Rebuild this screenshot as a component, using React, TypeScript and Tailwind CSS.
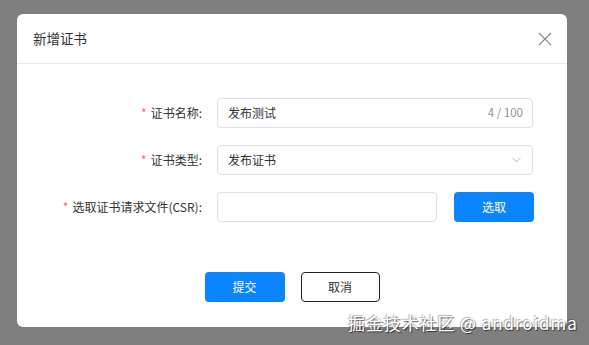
import React from "react";

const font = { fontFamily: '"Noto Sans CJK SC", "Noto Sans", sans-serif' };

function Label({ text }: { text: string }) {
  return (
    <div className="w-[200px] shrink-0 text-right text-[12px] text-[#333] pr-[15px] leading-[30px]">
      <span className="text-[#f56c6c] mr-[4px]">*</span>
      {text}
    </div>
  );
}

export default function App() {
  return (
    <div className="relative w-[589px] h-[345px] bg-[#7f7f7f] overflow-hidden" style={font}>
      <div className="absolute left-[17px] top-[14px] w-[550px] h-[313px] bg-white rounded-[6px] flex flex-col">
        <div className="h-[50px] flex items-center justify-between pl-[16px] pr-[16px] border-b border-[#e8e8e8]">
          <span className="text-[13.5px] text-[#303133]">新增证书</span>
          <svg width="14" height="14" viewBox="0 0 14 14" className="mr-[-1px]">
            <path d="M1 1 L13 13 M13 1 L1 13" stroke="#8c8c8c" strokeWidth="1.2" fill="none" />
          </svg>
        </div>
        <div className="flex flex-col gap-[17px] pt-[34px]">
          <div className="flex items-center">
            <Label text="证书名称:" />
            <div className="w-[316px] h-[30px] border border-[#dcdfe6] rounded-[4px] flex items-center justify-between pl-[10px] pr-[9px]">
              <span className="text-[12px] text-[#303133]">发布测试</span>
              <span className="text-[11.5px] text-[#909399]">4 / 100</span>
            </div>
          </div>
          <div className="flex items-center">
            <Label text="证书类型:" />
            <div className="w-[316px] h-[30px] border border-[#dcdfe6] rounded-[4px] flex items-center justify-between pl-[10px] pr-[11px]">
              <span className="text-[12px] text-[#303133]">发布证书</span>
              <svg width="9" height="6" viewBox="0 0 9 6">
                <path d="M0.5 0.8 L4.5 4.8 L8.5 0.8" stroke="#b0b3b8" strokeWidth="1" fill="none" />
              </svg>
            </div>
          </div>
          <div className="flex items-center">
            <Label text="选取证书请求文件(CSR):" />
            <div className="w-[220px] h-[30px] border border-[#dcdfe6] rounded-[4px]" />
            <button className="ml-[17px] w-[80px] h-[30px] rounded-[4px] bg-[#0a84ff] text-white text-[12px]">选取</button>
          </div>
        </div>
        <div className="flex justify-center gap-[16px] mt-[50px]">
          <button className="w-[80px] h-[30px] rounded-[4px] bg-[#0a84ff] text-white text-[12px]">提交</button>
          <button className="w-[79px] h-[30px] rounded-[4px] border border-[#222] bg-white text-[#303133] text-[12px]">取消</button>
        </div>
      </div>
      <div
        className="absolute left-[348px] top-[310px] text-[17px] text-white whitespace-nowrap tracking-[0.9px]"
        style={{ textShadow: "1px 1px 1px rgba(0,0,0,0.6), -1px -1px 1px rgba(0,0,0,0.3)" }}
      >
        掘金技术社区 @ androidma
      </div>
    </div>
  );
}
